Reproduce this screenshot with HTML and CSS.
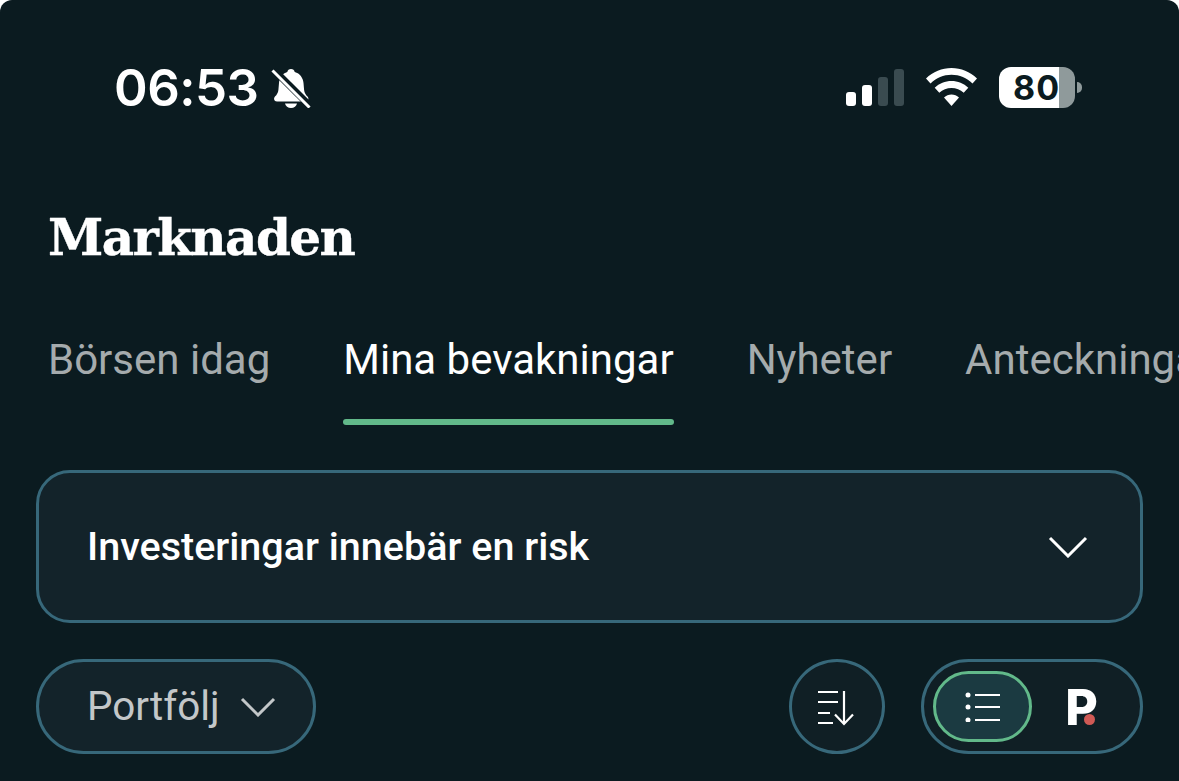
FILE: index.html
```html
<!DOCTYPE html>
<html lang="en">

<head>
  <meta charset="UTF-8">
  <title>Marknaden</title>
  <link rel="stylesheet" href="styles.css">
</head>

<body>
  <div class="screen">
    <div class="status-bar">
      <div class="status-left">
        <span class="clock">06:53</span>
        <svg class="bell" width="40" height="40" viewBox="0 0 40 40">
          <path d="M20 1c2 0 3.400 1.300 3.700 3 5.300 1.500 8.300 5.800 8.800 11l.6 7c.3 2.700 1.500 4.700 3.400 6.600 1.600 1.600 1.200 5-2 5H6c-3.200 0-3.600-3.400-2-5 1.900-1.900 3.100-3.900 3.400-6.600l.6-7c.5-5.200 3.500-9.500 8.300-11C16.600 2.300 18 1 20 1z" fill="#fff" />
          <path d="M14 35.500h12c-.5 2.700-3 4.500-6 4.500s-5.500-1.800-6-4.500z" fill="#fff" />
          <path d="M2 1l37 37" stroke="#0b1b20" stroke-width="7" fill="none" />
          <path d="M1.500 2.500l37 37" stroke="#fff" stroke-width="3" fill="none" />
        </svg>
      </div>
      <div class="status-right">
        <div class="signal">
          <span class="bar bar-1"></span>
          <span class="bar bar-2"></span>
          <span class="bar bar-3"></span>
          <span class="bar bar-4"></span>
        </div>
        <svg class="wifi" width="51" height="38" viewBox="0 0 51 38">
          <path d="M25.500 0C35 0 44 3.800 51 10.500l-4.500 5C40.800 10 33.400 6.800 25.500 6.800S10.200 10 4.500 15.500L0 10.500C7 3.800 16 0 25.500 0z" fill="#fff" />
          <path d="M25.500 13c6.300 0 12.200 2.400 16.800 6.700l-4.600 5c-3.300-3-7.600-4.800-12.200-4.800s-8.900 1.800-12.200 4.800l-4.600-5C13.300 15.400 19.200 13 25.500 13z" fill="#fff" />
          <path d="M25.500 26.500c2.800 0 5.400 1 7.500 2.900L25.500 38 18 29.400c2.100-1.900 4.700-2.900 7.500-2.900z" fill="#fff" />
        </svg>
        <div class="battery">
          <div class="battery-body">
            <span class="battery-level">80</span>
          </div>
          <span class="battery-tip"></span>
        </div>
      </div>
    </div>

    <h1 class="page-title">Marknaden</h1>

    <div class="tabs">
      <span class="tab">Börsen idag</span>
      <span class="tab tab-active">Mina bevakningar<span class="tab-underline"></span></span>
      <span class="tab">Nyheter</span>
      <span class="tab">Anteckningar</span>
    </div>

    <div class="risk-card">
      <span class="risk-text">Investeringar innebär en risk</span>
      <svg width="40" height="22" viewBox="0 0 40 22">
        <path d="M2 2l18 18L38 2" stroke="#fff" stroke-width="3" fill="none" />
      </svg>
    </div>

    <div class="toolbar">
      <button class="pill-btn">
        Portfölj
        <svg width="36" height="20" viewBox="0 0 36 20">
          <path d="M2 2l16 16L34 2" stroke="#c3c7c9" stroke-width="3" fill="none" />
        </svg>
      </button>
      <div class="toolbar-right">
        <button class="round-btn">
          <svg class="sort-icon" width="36" height="36" viewBox="0 0 36 36">
            <path d="M0 2h20M0 12h20M0 23h12M0 33h15M26 1v33" stroke="#fff" stroke-width="2.200" fill="none" />
            <path d="M17 24.500l9 9.500 9-9.500" stroke="#fff" stroke-width="2.200" fill="none" />
          </svg>
        </button>
        <div class="view-toggle">
          <span class="view-option view-active">
            <svg width="36" height="30" viewBox="0 0 36 30">
              <circle cx="3" cy="3" r="2.500" fill="#fff" />
              <circle cx="3" cy="15" r="2.500" fill="#fff" />
              <circle cx="3" cy="28" r="2.500" fill="#fff" />
              <path d="M10 3h25M10 15h25M10 28h25" stroke="#fff" stroke-width="2" fill="none" />
            </svg>
          </span>
          <span class="view-option">
            <span class="p-logo">P<span class="p-dot"></span></span>
          </span>
        </div>
      </div>
    </div>
  </div>
</body>

</html>
```

FILE: styles.css
```css
* {
  box-sizing: border-box;
}

html,
body {
  margin: 0;
  height: 100%;
  background-color: #fff;
}

body {
  overflow: hidden;
}

.screen {
  height: 781px;
  background-color: #0b1b20;
  border-radius: 12px 12px 0 0;
  color: #fff;
  font-family: Roboto, sans-serif;
  padding: 0 36px;
  overflow: hidden;
}

.status-bar {
  height: 207px;
  display: flex;
  justify-content: space-between;
  padding: 62px 61px 0 78px;
}

.status-left {
  display: flex;
  align-items: center;
  gap: 12px;
  height: 52px;
}

.clock {
  font-family: Inter, sans-serif;
  font-size: 51px;
  font-weight: 600;
  line-height: 52px;
  letter-spacing: -0.5px;
}

.status-right {
  display: flex;
  align-items: flex-start;
  gap: 22px;
  padding-top: 5px;
}

.signal {
  display: flex;
  align-items: flex-end;
  gap: 6px;
  height: 37px;
  margin-top: 2px;
}

.bar {
  width: 10px;
  border-radius: 3px;
  background-color: #fff;
}

.bar-1 {
  height: 14px;
}

.bar-2 {
  height: 21px;
}

.bar-3 {
  height: 29px;
  background-color: #3a4b50;
}

.bar-4 {
  height: 37px;
  background-color: #3a4b50;
}

.wifi {
  margin-top: 1px;
}

.battery {
  display: flex;
  align-items: center;
  gap: 2px;
  height: 41px;
}

.battery-body {
  width: 76px;
  height: 41px;
  border-radius: 12px;
  background: linear-gradient(to right, #fff 79%, #8f9a9b 79%);
  padding-left: 14px;
}

.battery-level {
  font-family: Inter, sans-serif;
  font-size: 34px;
  font-weight: 700;
  line-height: 41px;
  color: #0b1b20;
  letter-spacing: 1px;
}

.battery-tip {
  width: 5px;
  height: 11px;
  border-radius: 0 6px 6px 0;
  background-color: #8f9a9b;
}

.page-title {
  margin: 0 0 0 12px;
  font-family: "DejaVu Serif", serif;
  font-size: 50px;
  font-weight: 700;
  line-height: 62px;
  height: 62px;
  letter-spacing: -1.600px;
  -webkit-text-stroke: 0.4px #fff;
}

.tabs {
  display: flex;
  gap: 73px;
  margin-top: 50px;
  margin-left: 12px;
  white-space: nowrap;
  height: 106px;
}

.tab {
  font-size: 42px;
  line-height: 82px;
  color: #a5abad;
}

.tab-active {
  color: #fff;
}

.tab-underline {
  display: block;
  height: 6px;
  margin-top: 18px;
  border-radius: 3px;
  background-color: #62b98a;
}

.risk-card {
  margin-top: 45px;
  height: 153px;
  background-color: #13232a;
  border: 3px solid #37687a;
  border-radius: 34px;
  display: flex;
  align-items: center;
  justify-content: space-between;
  padding: 0 52px 0 48px;
}

.risk-text {
  font-size: 39.500px;
  font-weight: 500;
}

.toolbar {
  margin-top: 36px;
  height: 95px;
  display: flex;
  justify-content: space-between;
}

.toolbar-right {
  display: flex;
  gap: 36px;
}

.pill-btn {
  width: 280px;
  height: 95px;
  background-color: #13232a;
  border: 3px solid #37687a;
  border-radius: 48px;
  color: #c3c7c9;
  font-family: Roboto, sans-serif;
  font-size: 40.400px;
  display: flex;
  align-items: center;
  gap: 20px;
  padding: 0 0 0 48px;
}

.round-btn {
  width: 96px;
  height: 95px;
  padding: 0;
  background-color: #101f25;
  border: 3px solid #37687a;
  border-radius: 50%;
  display: flex;
  align-items: center;
  justify-content: center;
}

.sort-icon {
  margin: 3px 2px 0 0;
}

.view-toggle {
  width: 222px;
  height: 95px;
  background-color: #101f25;
  border: 3px solid #37687a;
  border-radius: 48px;
  display: flex;
  align-items: center;
  padding: 0 9px;
}

.view-option {
  width: 99px;
  height: 71px;
  display: flex;
  align-items: center;
  justify-content: center;
}

.view-active {
  background-color: #1b3a41;
  border: 3px solid #62b98a;
  border-radius: 36px;
}

.p-logo {
  position: relative;
  margin-left: 0;
  font-family: Inter, sans-serif;
  font-size: 50px;
  font-weight: 800;
  line-height: 50px;
  color: #fff;
}

.p-dot {
  position: absolute;
  right: 3px;
  bottom: 7px;
  width: 11px;
  height: 11px;
  border-radius: 50%;
  background-color: #d05a55;
}
```
